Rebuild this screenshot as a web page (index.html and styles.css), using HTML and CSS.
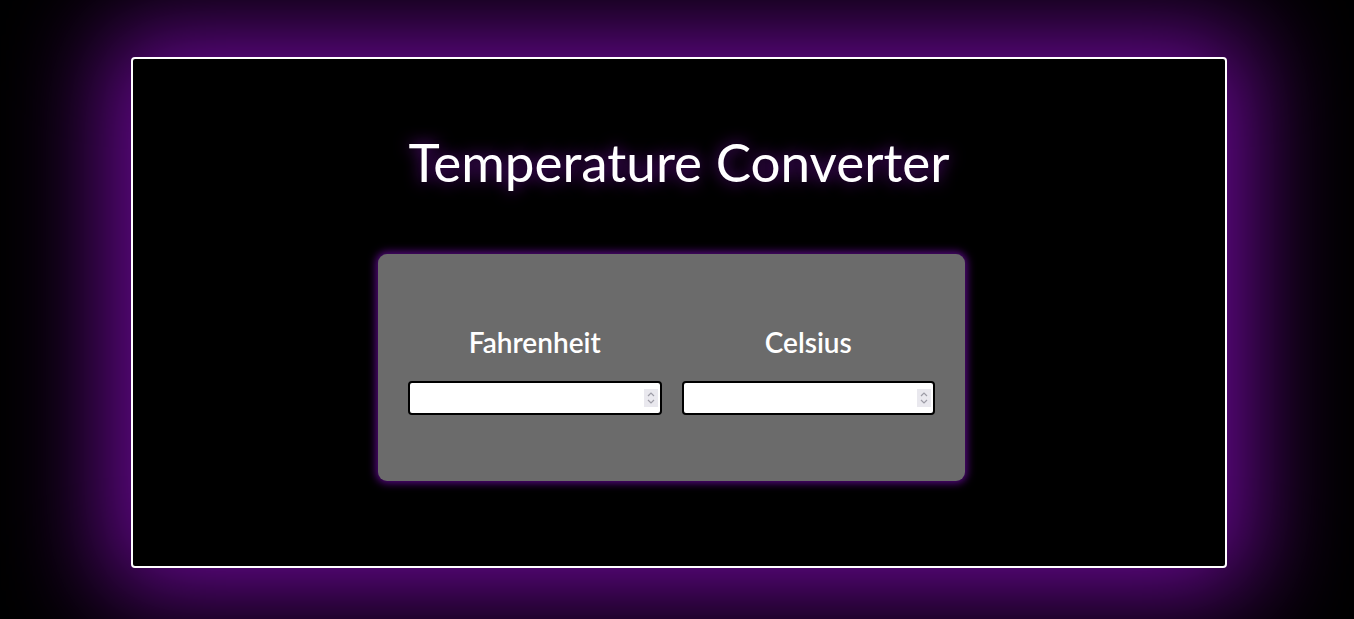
FILE: index.html
```html
<!DOCTYPE html>
<html>
<head>
<meta charset="utf-8">
<link rel="stylesheet" href="styles.css">
</head>
<body>
<main class="frame">
  <h1 class="title">Temperature Converter</h1>
  <section class="card">
    <div class="field">
      <label class="label" for="f">Fahrenheit</label>
      <div class="input-wrap">
        <input class="input" id="f" type="number">
        <span class="spin" aria-hidden="true">
          <svg width="10" height="16" viewBox="0 0 10 16"><path d="M2 6 L5 3 L8 6 M2 10 L5 13 L8 10" fill="none" stroke="#9d9ca6" stroke-width="1.2"/></svg>
        </span>
      </div>
    </div>
    <div class="field">
      <label class="label" for="c">Celsius</label>
      <div class="input-wrap">
        <input class="input" id="c" type="number">
        <span class="spin" aria-hidden="true">
          <svg width="10" height="16" viewBox="0 0 10 16"><path d="M2 6 L5 3 L8 6 M2 10 L5 13 L8 10" fill="none" stroke="#9d9ca6" stroke-width="1.2"/></svg>
        </span>
      </div>
    </div>
  </section>
</main>
</body>
</html>
```
FILE: styles.css
```css
html, body {
  margin: 0;
  padding: 0;
  background: #000;
  height: 100%;
  overflow: hidden;
}
body {
  padding-top: 57px;
  box-sizing: border-box;
  font-family: "Lato", "Open Sans", sans-serif;
  color: #fff;
}
.frame {
  box-sizing: border-box;
  width: 1096px;
  height: 511px;
  margin-left: 131px;
  border: 2px solid #fff;
  border-radius: 4px;
  background: #000;
  box-shadow: 0 0 100px 25px rgba(115, 10, 160, 0.95);
  display: flex;
  flex-direction: column;
  align-items: flex-start;
}
.title {
  align-self: center;
  margin: 72px 0 0 0;
  font-size: 53px;
  font-weight: 400;
  line-height: 62px;
  text-shadow: 0 0 16px rgba(140, 20, 200, 0.75);
}
.card {
  margin: 61px 0 0 245px;
  width: 587px;
  height: 227px;
  box-sizing: border-box;
  padding: 70px 30px 0 30px;
  background: #6b6b6b;
  border-radius: 9px;
  box-shadow: 0 0 8px 2px rgba(100, 10, 150, 0.9);
  display: flex;
  gap: 20px;
}
.field {
  flex: 1;
  display: flex;
  flex-direction: column;
  align-items: center;
  gap: 21px;
}
.label {
  font-size: 28px;
  line-height: 36px;
  font-weight: 600;
  color: #fff;
}
.input-wrap {
  position: relative;
  width: 100%;
}
.input {
  display: block;
  box-sizing: border-box;
  width: 100%;
  height: 34px;
  border: 2px solid #000;
  border-radius: 4px;
  background: #fff;
  font-family: inherit;
  font-size: 16px;
  padding: 0 4px;
}
.input::-webkit-inner-spin-button,
.input::-webkit-outer-spin-button {
  -webkit-appearance: none;
  margin: 0;
}
.spin {
  position: absolute;
  right: 4px;
  top: 8px;
  width: 14px;
  height: 18px;
  background: #e9e8ee;
  display: flex;
  align-items: center;
  justify-content: center;
}
```
